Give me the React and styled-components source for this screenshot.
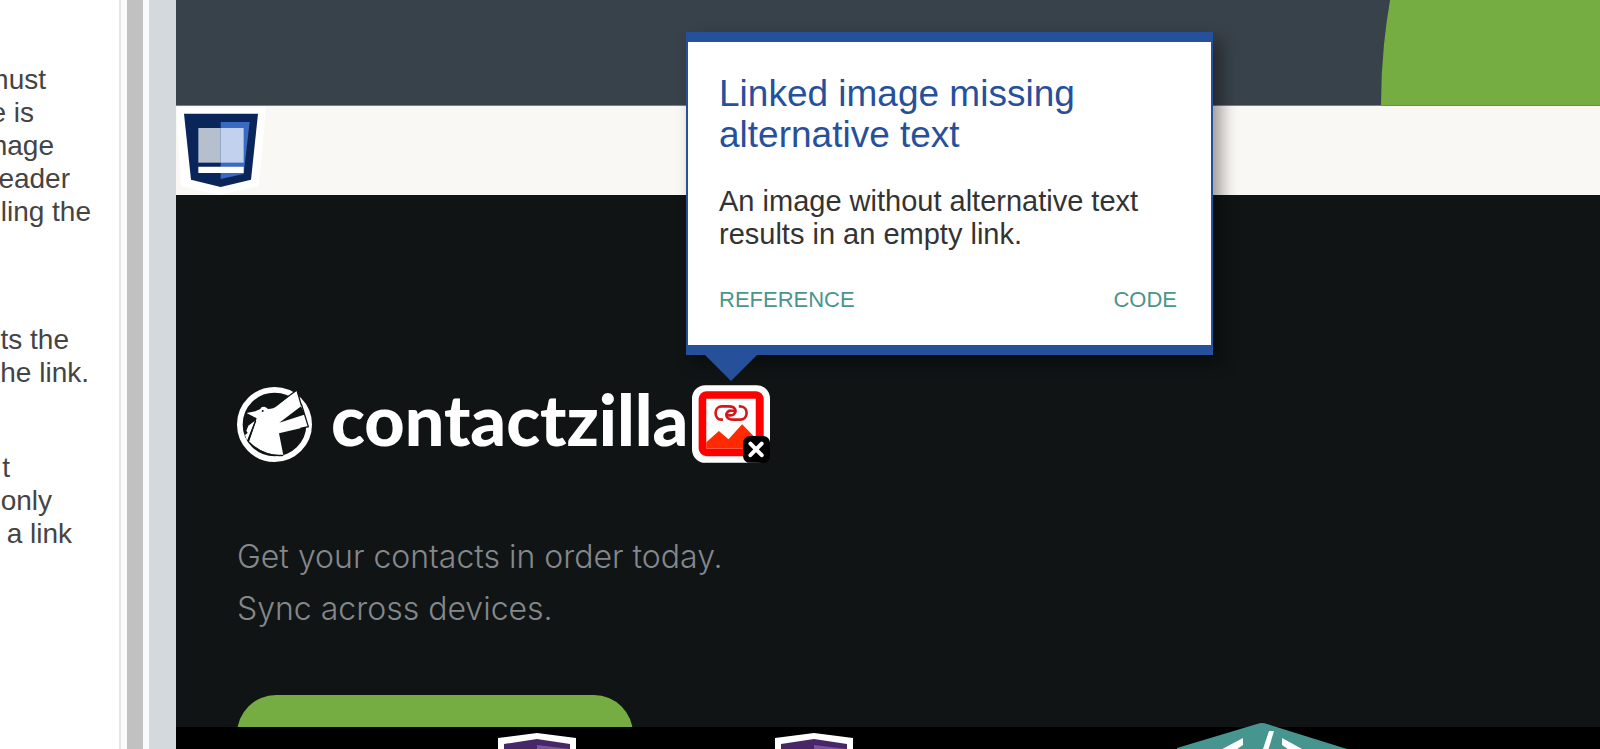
import React from "react";
import styled, { createGlobalStyle } from "styled-components";

const GlobalStyle = createGlobalStyle`
  *, *::before, *::after { box-sizing: border-box; }
  body { margin: 0; font-family: "Liberation Sans", Arial, sans-serif; background: #ffffff; }
  h2, p { margin: 0; font-weight: 400; }
`;

const Page = styled.div`
  display: flex;
  height: 100vh;
  overflow: hidden;
`;

const Sidebar = styled.aside`
  flex: none;
  display: flex;
  width: 149px;
  background: #ffffff;
`;

const SidebarText = styled.div`
  flex: 1;
  display: flex;
  flex-direction: column;
  padding-top: 63px;
  overflow: hidden;
  color: #444444;
  font-size: 28px;
  line-height: 33px;
`;

const Paragraph = styled.p`
  margin-bottom: ${(p) => p.$space}px;
`;

const Line = styled.span`
  display: flex;
  justify-content: flex-end;
  width: ${(p) => p.$end}px;
  white-space: nowrap;
`;

const ScrollTrack = styled.div`
  flex: none;
  width: 30px;
  padding: 0 6px;
  background: #fafafa;
  border-left: 2px solid #e5e5e5;
`;

const ScrollThumb = styled.div`
  width: 16px;
  height: 100%;
  background: #c1c1c1;
`;

const Divider = styled.div`
  flex: none;
  width: 27px;
  background: #d3d9dd;
`;

const Main = styled.main`
  flex: 1;
  min-width: 0;
  display: flex;
  flex-direction: column;
  background: #101414;
`;

const Banner = styled.header`
  position: relative;
  flex: none;
  height: 106px;
  overflow: hidden;
  background: #38424a;
  border-bottom: 1px solid #7c7f80;
`;

const BannerCircle = styled.div`
  position: absolute;
  top: -507px;
  left: calc(100% - 219px);
  width: 1224px;
  height: 1224px;
  border-radius: 50%;
  background: #76ad42;
`;

const Strip = styled.div`
  flex: none;
  display: flex;
  height: 89px;
  background: #faf8f4;
`;

const Hero = styled.section`
  flex: 1;
  min-height: 0;
  display: flex;
  flex-direction: column;
  align-items: flex-start;
  padding: 190px 61px 0;
`;

const Brand = styled.div`
  display: flex;
  align-items: center;
  height: 78px;
`;

const Wordmark = styled.span`
  align-self: flex-start;
  width: 361px;
  padding-left: 19px;
  color: #ffffff;
  font-family: Lato, sans-serif;
  font-size: 70px;
  font-weight: 900;
  line-height: 68px;
  white-space: nowrap;
`;

const IconAnchor = styled.span`
  position: relative;
  display: block;
  margin-left: 19px;
  height: 78px;
`;

const IconButton = styled.button`
  display: block;
  padding: 0;
  border: 0;
  background: none;
`;

const Tagline = styled.p`
  margin-top: 68px;
  color: #84888c;
  font-family: Inter, sans-serif;
  font-size: 32px;
  font-weight: 300;
  line-height: 52px;
`;

const CallToAction = styled.button`
  flex: none;
  width: 396px;
  height: 78px;
  margin-top: 60px;
  border: 0;
  border-radius: 39px;
  background: #76ad42;
`;

const Footer = styled.footer`
  position: relative;
  flex: none;
  display: flex;
  align-items: flex-start;
  height: 22px;
  padding-left: 322px;
  background: #000000;
`;

const FooterIcon = styled.svg`
  flex: none;
  margin: ${(p) => p.$margin};
`;

const Popup = styled.div`
  position: absolute;
  left: -6px;
  bottom: calc(100% + 30px);
  width: 527px;
  height: 323px;
  padding: 31px 34px 0 31px;
  background: #ffffff;
  border: solid #27509b;
  border-width: 10px 2px;
  box-shadow: 8px 8px 16px rgba(0, 0, 0, 0.4);

  &::after {
    content: "";
    position: absolute;
    left: 17px;
    top: 100%;
    margin-top: 10px;
    border: solid transparent;
    border-width: 26px 26px 0;
    border-top-color: #27509b;
  }
`;

const PopupTitle = styled.h2`
  color: #27509b;
  font-size: 37px;
  line-height: 41px;
`;

const PopupText = styled.p`
  margin-top: 30px;
  color: #333333;
  font-size: 29px;
  line-height: 33px;
`;

const PopupLinks = styled.nav`
  display: flex;
  justify-content: space-between;
  margin-top: 36px;
`;

const PopupLink = styled.a`
  color: #4a958d;
  font-size: 22px;
  line-height: 26px;
  text-decoration: none;
`;

const paragraphs = [
  { space: 95, lines: [["must", 46], ["e is", 34], ["mage", 54], ["eader", 70], ["ling the", 91]] },
  { space: 62, lines: [["ts the", 69], ["he link.", 89]] },
  { space: 0, lines: [["t", 10], ["only", 52], ["a link", 72]] },
];

function RegionIcon() {
  return (
    <svg width="90" height="89" viewBox="0 0 270 267" aria-hidden="true">
      <path d="M2 4H270L248 240L132 267L14 240Z" fill="#fff" />
      <path d="M24 23H246L225 221L134 243L45 221Z" fill="#0a2559" />
      <path d="M134 48H221L203 204L134 219Z" fill="#3a69c1" />
      <path d="M67 66H134V170H67Z" fill="#b6bfce" />
      <path d="M134 66H203V170H134Z" fill="#c1d1ee" />
      <path d="M67 182H203V201H67Z" fill="#fff" />
    </svg>
  );
}

function BirdLogo() {
  return (
    <svg width="75" height="75" viewBox="36 33 225 225" aria-hidden="true">
      <circle cx="148.500" cy="145.500" r="104" fill="#101414" stroke="#fff" strokeWidth="17" />
      <path d="M65 111L91 106L106 99Q108 91 118 92Q126 94 129 99Q146 99 156 90L215 43L229 90L163 140L242 115L252 151L162 172L175 238Q118 240 72 198L95 127L86 122Z" fill="#fff" />
      <path d="M166 78L216 42L229 88M229 84L250 152L226 157" fill="none" stroke="#101414" strokeWidth="4" />
      <path d="M70 149L90 134L66 194L60 177L68 171L64 164Z" fill="#fff" />
      <path d="M92 134L69 196M72 199Q115 243 175 238" fill="none" stroke="#101414" strokeWidth="4" />
      <circle cx="113" cy="105" r="3" fill="#101414" />
    </svg>
  );
}

function LinkedImageIcon() {
  return (
    <svg width="78" height="78" viewBox="0 0 235 234" aria-hidden="true">
      <rect width="235" height="234" rx="40" fill="#fff" />
      <rect x="20" y="18" width="196" height="196" rx="24" fill="#f00" />
      <path d="M43 41H192V191H43Z" fill="#fff" />
      <path d="M43 172L81 138L110 163L151 118L192 160V191H43Z" fill="#ff2a00" />
      <g fill="none" stroke="#d5181d" strokeWidth="8">
        <path d="M93 104H89C65 104 65 64 89 64H111C131 64 136 78 126 88C122 92 118 91 111 91H104" />
        <path d="M141 64H145C171 64 171 104 145 104H124C104 104 99 90 108 80C112 76 116 77 122 77H131" />
      </g>
      <rect x="154" y="153" width="81" height="81" rx="20" fill="#000" />
      <path d="M176 176L210 211M210 176L176 211" stroke="#fff" strokeWidth="12" strokeLinecap="round" />
    </svg>
  );
}

function ShieldIcon({ margin }) {
  return (
    <FooterIcon $margin={margin} width="78" height="80" viewBox="0 0 78 80" aria-hidden="true">
      <path d="M0 5L39 0L78 5V80H0Z" fill="#fff" />
      <path d="M6 11L39 6L72 11V80H6Z" fill="#472768" />
      <path d="M39 12L72 16V80H39Z" fill="#7a559f" />
    </FooterIcon>
  );
}

function CodeIcon() {
  return (
    <FooterIcon $margin="-4px 0 0 324px" width="170" height="100" viewBox="0 0 170 100" aria-hidden="true">
      <path d="M0 25L80 1Q85 -1 90 1L170 26V100H0Z" fill="#46958f" />
      <path d="M66 15V22L50 33H32Z" fill="#fff" />
      <path d="M92 8H97L88 38H82Z" fill="#fff" />
      <path d="M105 15L138 33H121L105 22Z" fill="#fff" />
    </FooterIcon>
  );
}

export default function App() {
  return (
    <>
      <GlobalStyle />
      <Page>
        <Sidebar>
          <SidebarText>
            {paragraphs.map(({ space, lines }, i) => (
              <Paragraph key={i} $space={space}>
                {lines.map(([text, end]) => (
                  <Line key={text} $end={end}>{text}</Line>
                ))}
              </Paragraph>
            ))}
          </SidebarText>
          <ScrollTrack>
            <ScrollThumb />
          </ScrollTrack>
        </Sidebar>
        <Divider />
        <Main>
          <Banner>
            <BannerCircle />
          </Banner>
          <Strip>
            <RegionIcon />
          </Strip>
          <Hero>
            <Brand>
              <BirdLogo />
              <Wordmark>contactzilla</Wordmark>
              <IconAnchor>
                <IconButton type="button" aria-label="Linked image missing alternative text">
                  <LinkedImageIcon />
                </IconButton>
                <Popup role="dialog">
                  <PopupTitle>Linked image missing alternative text</PopupTitle>
                  <PopupText>An image without alternative text results in an empty link.</PopupText>
                  <PopupLinks>
                    <PopupLink href="#reference">REFERENCE</PopupLink>
                    <PopupLink href="#code">CODE</PopupLink>
                  </PopupLinks>
                </Popup>
              </IconAnchor>
            </Brand>
            <Tagline>
              Get your contacts in order today.
              <br />
              Sync across devices.
            </Tagline>
            <CallToAction type="button" aria-label="Get started" />
          </Hero>
          <Footer>
            <ShieldIcon margin="6px 0 0" />
            <ShieldIcon margin="6px 0 0 199px" />
            <CodeIcon />
          </Footer>
        </Main>
      </Page>
    </>
  );
}
